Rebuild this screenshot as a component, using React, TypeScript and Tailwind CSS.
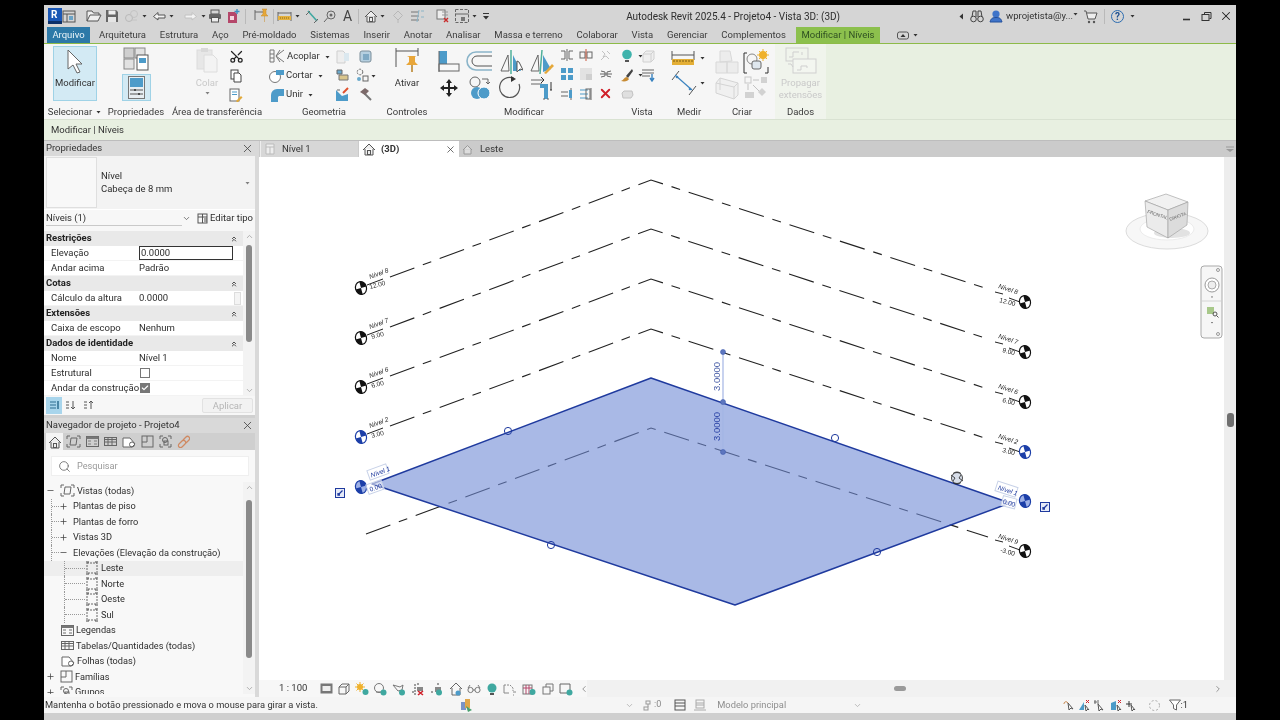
import type { ReactNode } from "react"
import { Scissors, Search, X, ChevronUp, ChevronDown, ChevronLeft, ChevronRight, Check, Minus, Plus, ChevronsUp } from "lucide-react"

function Ic({ w = 16, h, className, children }: { w?: number; h?: number; className?: string; children?: ReactNode }) {
  return (
    <svg width={w} height={h ?? w} viewBox={`0 0 ${w} ${h ?? w}`} fill="none" className={`shrink-0 ${className ?? ""}`}>
      {children}
    </svg>
  )
}

function Dot({ className }: { className?: string }) {
  return (
    <Ic w={5} h={4} className={className}>
      <path d="M0.5 1h4L2.5 3.5z" fill="#333" />
    </Ic>
  )
}

const Blue = "#4d9bc9"
const Teal = "#3fa8a0"

/* quick access */
const QPanel = () => (
  <Ic w={14}><rect x="1" y="2" width="12" height="11" stroke="#555" /><path d="M1 5h12M5 5v8" stroke="#555" /><rect x="7" y="7" width="4" height="4" fill="#6aa3c7" /></Ic>
)
const QOpen = () => (
  <Ic w={16}><path d="M1 13V3h5l1.5 2H13v2M1 13l3-6h11l-3 6z" stroke="#555" fill="#eee" /></Ic>
)
const QSave = () => (
  <Ic w={14}><path d="M1 1h10l2 2v10H1z" fill="#666" /><rect x="3.5" y="1.5" width="7" height="4" fill="#eee" /><rect x="3" y="8" width="8" height="5" fill="#e5e5e5" /></Ic>
)
const QSync = () => (
  <Ic w={14}><circle cx="5" cy="9" r="3.5" stroke="#b9b9b9" /><circle cx="10" cy="5" r="3.5" stroke="#c4c4c4" /><path d="M8 11h5" stroke="#c4c4c4" /></Ic>
)
const QUndo = ({ c = "#555" }: { c?: string }) => (
  <Ic w={14}><path d="M6 3.5L1.5 7.5 6 11V9h7V6H6z" stroke={c} fill="#f3f3f3" /></Ic>
)
const QRedo = () => (
  <Ic w={14}><path d="M8 3.5l4.5 4L8 11V9H1V6h7z" stroke="#c2c2c2" fill="#f3f3f3" /></Ic>
)
const QPrint = () => (
  <Ic w={14}><rect x="3" y="1" width="8" height="4" stroke="#555" /><rect x="1" y="5" width="12" height="5" rx="1" fill="#666" /><rect x="3.5" y="8.5" width="7" height="4.5" fill="#eee" stroke="#555" /></Ic>
)
const QDoc = () => (
  <Ic w={14}><path d="M2 3h7l2 2v9H2z" fill="#b5476a" /><rect x="4" y="7" width="4" height="4" fill="#f3d6df" /><path d="M11 0v5M8.5 2.5h5" stroke="#3d8fc0" strokeWidth="1.4" /></Ic>
)
const QPinDim = () => (
  <Ic w={16}>
    <path d="M1 2v10M1 4h9" stroke="#666" />
    <path d="M8 1h5l-1 1v4l2 2H7l2-2V2zM10.5 8v6" fill="#e5a83a" stroke="#c98a25" strokeWidth="0.5" />
  </Ic>
)
const QDim = () => (
  <Ic w={15}><path d="M1 3v9M14 3v9M1 4h13" stroke="#666" /><rect x="1" y="7" width="13" height="4" fill="#e5b13e" /><path d="M3 9h9" stroke="#8a6a16" strokeDasharray="1 1" /></Ic>
)
const QAlign = () => (
  <Ic w={14}><path d="M3 2l9 10" stroke={Teal} strokeWidth="1.6" /><path d="M1 6l4-4M9 14l4-4" stroke="#666" /></Ic>
)
const QTag = () => (
  <Ic w={14}><circle cx="8" cy="6" r="4" stroke="#666" /><circle cx="8" cy="6" r="1.5" fill="#666" /><path d="M4.5 9L1 13" stroke="#666" /></Ic>
)
const QHome = () => (
  <Ic w={14}><path d="M1 8l6-6 6 6M3 7v6h8V7" stroke="#555" fill="#eee" /><rect x="5.5" y="8.5" width="3" height="4" stroke="#555" /></Ic>
)
const QSection = () => (
  <Ic w={14}><path d="M7 2l4.5 4.5L7 11 2.5 6.5z" stroke="#b8b8b8" /><path d="M7 11v3" stroke="#b8b8b8" /></Ic>
)
const QLines = () => (
  <Ic w={14}><path d="M1 3h8M1 7h8M1 11h8" stroke="#777" /><path d="M9 1l-2 12M11 2h3M11 8h3" stroke="#8bb4c7" /></Ic>
)
const QCloseWin = () => (
  <Ic w={14}><rect x="1" y="1" width="8" height="9" stroke="#777" fill="#eee" /><path d="M6 3h6M6 6h6" stroke="#999" /><path d="M8 9l4 4M12 9l-4 4" stroke="#c92b2b" strokeWidth="1.4" /></Ic>
)
const QSwitch = () => (
  <Ic w={16}><rect x="1.5" y="1.5" width="13" height="13" stroke="#666" strokeDasharray="3 1.5" /><path d="M1.5 6h13" stroke="#666" /><rect x="7" y="9" width="4" height="4" fill="#777" /></Ic>
)
const QMore = () => (
  <Ic w={8} h={8}><path d="M1 1.5h6" stroke="#333" /><path d="M1 4h6L4 7.5z" fill="#333" /></Ic>
)
const VSep = ({ className }: { className?: string }) => <div className={`w-px h-[15px] bg-[#b9b9b9] ${className ?? ""}`} />

function TitleBar() {
  return (
    <div className="h-[22px] bg-[#d5d5d5] flex items-center text-[9.5px] text-[#2e2e2e] shrink-0">
      <div className="ml-[4px] w-[14px] h-[16px] bg-[#1a57b5] text-white text-[10px] font-bold leading-[13px] pl-[3px] border-b-[3px] border-[#0c3069]">R</div>
      <QPanel />
      <div className="flex items-center">
        <span className="ml-[10px]"><QOpen /></span>
        <span className="ml-[3px]"><QSave /></span>
        <span className="ml-[5px]"><QSync /></span>
        <Dot className="ml-[4px]" />
        <span className="ml-[5px]"><QUndo /></span>
        <Dot className="ml-[3px]" />
        <span className="ml-[10px]"><QRedo /></span>
        <Dot className="ml-[3px]" />
        <span className="ml-[2px]"><QPrint /></span>
        <span className="ml-[4px]"><QDoc /></span>
        <VSep className="ml-[5px]" />
        <span className="ml-[8px]"><QPinDim /></span>
        <VSep className="ml-[3px]" />
        <span className="ml-[3px]"><QDim /></span>
        <Dot className="ml-[3px]" />
        <span className="ml-[5px]"><QAlign /></span>
        <span className="ml-[4px]"><QTag /></span>
        <span className="ml-[6px] text-[14px] text-[#444] leading-none">A</span>
        <VSep className="ml-[6px]" />
        <span className="ml-[5px]"><QHome /></span>
        <Dot className="ml-[2px]" />
        <span className="ml-[6px]"><QSection /></span>
        <span className="ml-[5px]"><QLines /></span>
        <span className="ml-[12px]"><QCloseWin /></span>
        <span className="ml-[4px]"><QSwitch /></span>
        <Dot className="ml-[2px]" />
        <span className="ml-[5px]"><QMore /></span>
      </div>
      <div className="ml-[136px] w-[220px] text-[10px] whitespace-nowrap">Autodesk Revit 2025.4 - Projeto4 - Vista 3D: (3D)</div>
      <div className="ml-auto flex items-center pr-[3px]">
        <Ic w={5} h={7}><path d="M4 0.5v6L0.5 3.5z" fill="#333" /></Ic>
        <Ic w={14} className="ml-[6px]"><circle cx="3.5" cy="10" r="2.8" stroke="#444" /><circle cx="10.5" cy="10" r="2.8" stroke="#444" /><path d="M2 8l1-6h3v6M8 8V2h3l1 6" stroke="#444" /></Ic>
        <Ic w={14} className="ml-[5px]"><circle cx="7" cy="5" r="3.6" fill="#3f74c9" /><path d="M1 13c1-4 3-4.500 6-4.500S12 9 13 13z" fill="#3f74c9" stroke="#23509c" /></Ic>
        <span className="ml-[3px] text-[9.5px] text-[#333]">wprojetista@y...</span>
        <Dot className="-mt-[4px]" />
        <Ic w={15} className="ml-[5px]"><path d="M1 2h2l2 8h7l2-6H4" stroke="#555" fill="#eee" /><circle cx="6" cy="13" r="1.2" fill="#555" /><circle cx="11" cy="13" r="1.2" fill="#555" /></Ic>
        <VSep className="ml-[6px]" />
        <div className="ml-[6px] w-[13px] h-[13px] rounded-full border border-[#2c6cb0] text-[10px] leading-[11px] text-center font-bold text-[#1d4f8f]">?</div>
        <Dot className="ml-[6px]" />
        <Ic w={10} className="ml-[47px]"><path d="M1 8.500h7" stroke="#333" strokeWidth="1.6" /></Ic>
        <Ic w={11} className="ml-[9px]"><rect x="1" y="3.500" width="7" height="6" stroke="#333" /><path d="M3.500 3V1.500h6.500v6H8.500" stroke="#333" /></Ic>
        <X size={14} strokeWidth={1.8} className="ml-[7px] text-[#222]" />
      </div>
    </div>
  )
}

const tabs = ["Arquitetura", "Estrutura", "Aço", "Pré-moldado", "Sistemas", "Inserir", "Anotar", "Analisar", "Massa e terreno", "Colaborar", "Vista", "Gerenciar", "Complementos"]

function TabBar() {
  return (
    <div className="h-[17px] bg-[#d5d5d5] border-b border-[#8dbb48] flex items-stretch text-[9.5px] text-[#3c3c3c] shrink-0 pl-[3px]">
      <div className="w-[43px] bg-[#2d79a8] text-[#eaf4f9] flex items-center justify-center">Arquivo</div>
      <div className="flex items-center gap-[13.800px] ml-[9px]">
        {tabs.map(t => <span key={t} className="whitespace-nowrap">{t}</span>)}
      </div>
      <div className="ml-[10px] w-[84px] bg-[#8cc04d] text-[#2f4f22] flex items-center justify-center whitespace-nowrap">Modificar | Níveis</div>
      <Ic w={13} h={9} className="ml-[17px] self-center"><rect x="0.500" y="1" width="11" height="7" rx="2" stroke="#555" /><path d="M3.500 6l2.500-3 2.500 3z" fill="#333" /></Ic>
      <Dot className="ml-[3px] self-center" />
    </div>
  )
}

function Panel({ label, w, bg, children }: { label: ReactNode; w: string; bg?: string; children?: ReactNode }) {
  return (
    <div className={`${w} ${bg ?? ""} flex flex-col shrink-0`}>
      <div className="h-[60px] flex">{children}</div>
      <div className="h-[15px] pt-[1px] flex items-center justify-center text-[9.5px] text-[#3a3a3a] whitespace-nowrap">{label}</div>
    </div>
  )
}

/* ribbon icons */
const Paste = () => (
  <Ic w={22} h={26}><rect x="1" y="3" width="15" height="19" fill="#e7e7e7" stroke="#dcdcdc" /><rect x="5" y="1" width="7" height="4" fill="#d9d9d9" /><path d="M8 8h9l4 4v13H8z" fill="#f3f3f3" stroke="#dcdcdc" /></Ic>
)
const CopyI = () => (
  <Ic w={14}><rect x="2" y="1" width="7" height="9" stroke="#444" fill="#fff" /><path d="M5 4h5l2 2v7H5z" stroke="#444" fill="#fff" /></Ic>
)
const MatchI = () => (
  <Ic w={14}><rect x="1" y="1" width="9" height="12" stroke="#666" fill="#fff" /><path d="M3 4h5M3 6.500h5" stroke={Blue} /><path d="M7 13l5-5 1.500 1.500-5 5z" fill="#e2a93a" /></Ic>
)
const Acoplar = () => (
  <Ic w={18}><path d="M2 2h4v12H2zM2 6h4M2 10h4" stroke="#777" /><path d="M16 2L8 8l8 6M12 2l-4 6 4 6" stroke="#777" /></Ic>
)
const Cortar = () => (
  <Ic w={18}><circle cx="7" cy="10" r="5.500" stroke="#777" fill="#fff" /><path d="M8 3h8v5H8z" fill={Blue} /></Ic>
)
const Unir = () => (
  <Ic w={18}><path d="M3 16V9a6 6 0 016-6h7v7h-5l-1 1v5z" fill={Blue} /></Ic>
)
const Sm = ({ v }: { v: number }) => {
  if (v === 0) return <Ic w={15}><path d="M2 2h6l2 2v10H2z" stroke="#cfcfcf" fill="#eee" /><path d="M9 4h5v8H9z" fill="#dbe8ef" /></Ic>
  if (v === 1) return <Ic w={15}><rect x="2" y="2" width="11" height="11" rx="2" fill="#b5cfe0" stroke="#7d8f9b" /><rect x="5" y="5" width="6" height="6" fill="#7fa9c4" /></Ic>
  if (v === 2) return <Ic w={15}><path d="M2 2h5v4H2z" fill="#6aa9cc" stroke="#666" /><path d="M4 7h9v5H4z" fill="#d9c58c" stroke="#777" /></Ic>
  if (v === 3) return <Ic w={15}><circle cx="5" cy="4" r="2.800" stroke="#666" strokeDasharray="2 1" /><rect x="8" y="8" width="5" height="5" stroke="#666" /><circle cx="4" cy="11" r="2" fill="#6aa9cc" /></Ic>
  if (v === 4) return <Ic w={15}><path d="M1 14V3l6 6 6-2v7z" fill={Blue} /><path d="M8 6l5-5" stroke="#e0512d" strokeWidth="2" /><path d="M2 3h3" stroke="#666" /></Ic>
  return <Ic w={15}><path d="M5 5l8 8" stroke="#777" strokeWidth="2" /><path d="M2 5l5-4 4 3-4 4z" fill="#7c6a6a" /></Ic>
}
const Align = () => (
  <Ic w={22} h={24}><rect x="1" y="1" width="8" height="13" fill={Blue} /><rect x="1" y="14" width="20" height="7" stroke="#666" fill="#f8f8f8" /><path d="M1 1v21" stroke="#666" /></Ic>
)
const Offset = () => (
  <Ic w={27} h={24}><path d="M26 2H10a9 9 0 000 18h16" stroke="#8ab4c9" strokeWidth="1.600" /><path d="M26 6H11a5 5 0 000 10h15" stroke="#555" /></Ic>
)
const MirrorA = () => (
  <Ic w={24} h={26}><path d="M9 6L2 22h8z" stroke="#666" /><path d="M12 1v24" stroke="#4fb09a" strokeWidth="1.500" /><path d="M14 6l8 16h-8z" fill={Blue} /><path d="M18 12v11l3-3 3 1-4-8z" fill="#fff" stroke="#555" /></Ic>
)
const MirrorB = () => (
  <Ic w={26} h={26}><path d="M9 6L2 22h8z" stroke="#666" /><path d="M13 1l-2 24" stroke="#4fb09a" strokeWidth="1.500" /><path d="M14 6l8 14-8 3z" fill={Blue} /><path d="M15 24l8-9 2 2-8 8z" fill="#e5a83a" /></Ic>
)
const MoveI = () => (
  <Ic w={20}><path d="M10 1l3 4h-2v4h4V7l4 3-4 3v-2h-4v4h2l-3 4-3-4h2v-4H5v2l-4-3 4-3v2h4V5H7z" fill="#222" /></Ic>
)
const CopyBig = () => (
  <Ic w={24}><circle cx="7" cy="6" r="5" stroke="#666" /><path d="M14 3h6v5M20 8l-2-2M20 8l2-2" stroke="#666" /><circle cx="9" cy="17" r="6" fill={Blue} /><circle cx="16" cy="17" r="6" fill={Blue} stroke="#fff" /></Ic>
)
const RotateI = () => (
  <Ic w={24}><path d="M15 2.500A10 10 0 1020 8" stroke="#555" strokeWidth="1.200" /><path d="M12 0l5 3-5 3z" fill="#333" /></Ic>
)
const TrimI = () => (
  <Ic w={24}><path d="M1 4h13M1 8h11" stroke="#666" /><path d="M11 1l3 3-3 3" stroke="#333" /><path d="M10 8h8v15h-4V12h-4z" fill={Blue} /><path d="M21 6v8M20 14h2" stroke="#333" /><path d="M14 24v-2M18 24v-2" stroke="#666" /></Ic>
)
const Ms = ({ v }: { v: number }) => {
  const g = "#666"
  if (v === 0) return <Ic w={14}><path d="M1 3h4v8H1M13 3H9v8h4M7 1v12" stroke={g} /></Ic>
  if (v === 1) return <Ic w={14}><rect x="1" y="4" width="5" height="6" stroke={g} /><rect x="8" y="4" width="5" height="6" stroke={g} /><path d="M7 1v12" stroke="#c9563c" /></Ic>
  if (v === 2) return <Ic w={14}><path d="M3 3l3 3-2 3 3-1 3 3M8 3l3 3M2 12l3-3" stroke="#c2c2c2" /></Ic>
  if (v === 3) return <Ic w={14}><rect x="1" y="1" width="5" height="5" fill={Blue} /><rect x="8" y="1" width="5" height="5" fill={Blue} /><rect x="1" y="8" width="5" height="5" fill={Blue} /><rect x="8" y="8" width="5" height="5" fill={Blue} /></Ic>
  if (v === 4) return <Ic w={14}><rect x="1" y="1" width="12" height="12" fill="#e2e2e2" /><rect x="7" y="7" width="6" height="6" fill="#cfcfcf" /></Ic>
  if (v === 5) return <Ic w={14}><path d="M2 4l4 1v4l-4 1M12 4L8 5v4l4 1M1 7h12" stroke={g} /></Ic>
  if (v === 6) return <Ic w={14}><path d="M1 5h7M1 9h7" stroke={g} /><path d="M11 1v12" stroke={g} /><rect x="9" y="3" width="3" height="8" fill={Blue} /></Ic>
  if (v === 7) return <Ic w={14}><path d="M1 3h8M1 7h8M1 11h8" stroke={Blue} /><path d="M12 1v12" stroke={g} /><rect x="7" y="2" width="4" height="10" stroke={g} /></Ic>
  return <X size={15} strokeWidth={3} className="text-[#d0202a]" />
}
const Bulb = () => (
  <Ic w={14}><circle cx="7" cy="5.500" r="4.800" fill="#3fb3ac" /><path d="M5 11h4v2H5z" fill="#555" /></Ic>
)
const GrayCube = () => (
  <Ic w={14}><path d="M2 5l3-3h8v8l-3 3H2z" stroke="#d0d0d0" fill="#efefef" /><path d="M2 5h8v8M10 5l3-3" stroke="#d0d0d0" /></Ic>
)
const Brush = () => (
  <Ic w={14}><path d="M12 1L6 8l2 2 5-7z" fill="#444" /><path d="M7 9c-3 0-3 3-6 4 4 1 7 0 8-2z" fill="#c78b33" /></Ic>
)
const Overlay = () => (
  <Ic w={14}><path d="M1 2h12M1 5h12M1 8h8" stroke="#666" /><path d="M11 6v6M9 10l2 3 2-3" stroke="#3a83c0" strokeWidth="1.400" /></Ic>
)
const Pill = () => (
  <Ic w={14}><path d="M2 5l2-2h8l1 4-2 3H3z" fill="#dfdfdf" stroke="#c2c2c2" /></Ic>
)
const Ruler = () => (
  <Ic w={24} h={16}><path d="M1 1v9M23 1v9M1 5h22" stroke="#555" /><rect x="1" y="9" width="22" height="6" fill="#e4af36" /><path d="M3 10v2M6 10v2M9 10v2M12 10v2M15 10v2M18 10v2M21 10v2" stroke="#7d5d10" /></Ic>
)
const Diag = () => (
  <Ic w={26}><path d="M8 1L1 10M25 16l-7 9" stroke="#555" /><path d="M4 5l17 15" stroke="#3a83c0" strokeWidth="1.200" /><circle cx="6" cy="7" r="1.300" fill="#3a83c0" /><circle cx="19" cy="19" r="1.300" fill="#3a83c0" /></Ic>
)
const CubeL = () => (
  <Ic w={26}><path d="M5 2l10 0 2 10-12 1zM1 13h11v11H1zM12 13h11v11H12z" fill="#ececec" stroke="#d8d8d8" /></Ic>
)
const SunBr = () => (
  <Ic w={26}><path d="M4 4H1v20h3M22 24h3v-6" stroke="#333" /><circle cx="9" cy="10" r="5" stroke="#888" /><rect x="9" y="12" width="9" height="8" rx="2" fill="#dfe7ee" stroke="#666" /><circle cx="20" cy="6" r="4" fill="#efb12d" /><path d="M20 0v12M14 6h12M16 2l8 8M24 2l-8 8" stroke="#efb12d" /></Ic>
)
const Walls = () => (
  <Ic w={26}><path d="M1 8l4-5 18 5v12l-4 4L1 18z" fill="#f0f0f0" stroke="#d4d4d4" /><path d="M5 3v12M19 12v12M1 8l18 4 4-4" stroke="#d4d4d4" /></Ic>
)
const Flow = () => (
  <Ic w={24}><rect x="1" y="1" width="6" height="6" stroke="#c8c8c8" /><rect x="17" y="1" width="6" height="6" fill="#d2d2d2" /><path d="M9 4h6M4 8v6M9 9l6 6" stroke="#c2c2c2" /><rect x="1" y="16" width="9" height="6" fill="#d2d2d2" /><path d="M18 12l4 4-4 4-4-4z" fill="#d2d2d2" /></Ic>
)
const Prop = () => (
  <Ic w={32} h={27}><rect x="1" y="1" width="22" height="13" stroke="#cfcfcf" /><path d="M4 10h4v-5h6M17 5v3" stroke="#cfcfcf" /><rect x="8" y="12" width="23" height="14" stroke="#cfcfcf" fill="#f3f6f0" /><path d="M3 17h3l2 3M12 23h4v-4h6v2" stroke="#cfcfcf" /></Ic>
)

function Ribbon() {
  const R = "flex items-center h-[19px]"
  return (
    <div className="h-[76px] bg-[#e8f0e1] flex shrink-0 border-b border-[#d9e2d2]">
      <div className="flex bg-[#f6f6f6]">
        <Panel w="w-[61px]" label={<span className="flex items-center gap-[4px]">Selecionar <Dot /></span>}>
          <div className="ml-[9px] mt-[2px] w-[44px] h-[55px] bg-[#d3eaf4] border border-[#9fd2e6] flex flex-col items-center">
            <Ic w={20} h={26} className="mt-[2px]"><path d="M3 1v19l5-4 4 8 3-1-4-8h6z" stroke="#666" fill="#fff" /></Ic>
            <span className="text-[9.5px] text-[#333] mt-[1px]">Modificar</span>
          </div>
        </Panel>
        <Panel w="w-[62px]" label="Propriedades">
          <div className="w-full flex flex-col items-center mt-[2px]">
            <Ic w={26} h={26}>
              <rect x="1" y="2" width="10" height="10" fill="#cfcfcf" stroke="#888" /><rect x="12" y="2" width="10" height="10" fill="#e2e2e2" stroke="#888" />
              <rect x="1" y="13" width="10" height="10" fill="#e2e2e2" stroke="#888" /><rect x="14" y="9" width="11" height="15" fill="#fff" stroke="#555" /><rect x="16" y="12" width="7" height="5" fill="#4d9bc9" />
            </Ic>
            <div className="mt-[2px] w-[29px] h-[27px] bg-[#d3eaf4] border border-[#9fd2e6] flex items-center justify-center">
              <Ic w={17} h={23}><rect x="0.500" y="0.500" width="16" height="22" fill="#e8eef2" stroke="#777" /><rect x="2" y="2" width="13" height="9" fill="#4d9bc9" /><path d="M2 14h13M2 18h13" stroke="#555" /><path d="M7 13v2M11 17v2" stroke="#333" strokeWidth="1.500" /></Ic>
            </div>
          </div>
        </Panel>
        <Panel w="w-[100px]" label="Área de transferência">
          <div className="ml-[29px] w-[22px] mt-[3px] flex flex-col items-center">
            <Paste />
            <span className="text-[9.5px] text-[#c9c9c9] mt-[3px]">Colar</span>
            <Dot className="mt-[1px] opacity-60" />
          </div>
          <div className="ml-[10px] flex flex-col items-center w-[16px] mt-[3px]">
            <div className={R}><Scissors size={15} strokeWidth={2} className="text-[#222] -rotate-90" /></div>
            <div className={R}><CopyI /></div>
            <div className={R}><MatchI /></div>
          </div>
        </Panel>
        <Panel w="w-[114px]" label="Geometria">
          <div className="mt-[3px] pl-[1px] grid grid-cols-[63px_23px_23px] text-[9.5px] text-[#333]">
            <div className={R}><Acoplar /><span className="ml-[1px]">Acoplar</span><Dot className="ml-[5px]" /></div>
            <div className={`${R} justify-center`}><Sm v={0} /></div>
            <div className={`${R} justify-center`}><Sm v={1} /></div>
            <div className={R}><Cortar /><span>Cortar</span><Dot className="ml-[5px]" /></div>
            <div className={`${R} justify-center`}><Sm v={2} /></div>
            <div className={`${R} justify-center`}><Sm v={3} /><Dot className="ml-[1px]" /></div>
            <div className={R}><Unir /><span>Unir</span><Dot className="ml-[5px]" /></div>
            <div className={`${R} justify-center`}><Sm v={4} /></div>
            <div className={`${R} justify-center`}><Sm v={5} /></div>
          </div>
        </Panel>
        <Panel w="w-[52px]" label="Controles">
          <div className="w-full flex flex-col items-center mt-[3px]">
            <Ic w={24} h={26}><path d="M1 1v19M23 1v8M1 4h22" stroke="#555" /><path d="M12 9h9l-1 1v5l3 3H11l3-3v-5z" fill="#e8a63a" /><path d="M17 18v7" stroke="#b77f22" strokeWidth="1.500" /></Ic>
            <span className="text-[9.5px] text-[#333] mt-[3px]">Ativar</span>
          </div>
        </Panel>
        <Panel w="w-[182px]" label="Modificar">
          <div className="mt-[5px] grid grid-cols-[31px_31px_31px_31px] grid-rows-[26px_26px] place-items-center h-fit">
            <Align /><Offset /><MirrorA /><MirrorB />
            <MoveI /><CopyBig /><RotateI /><TrimI />
          </div>
          <div className="mt-[1px] grid grid-cols-[19.500px_19.500px_19.500px] auto-rows-[19.500px] place-items-center h-fit">
            {[0, 1, 2, 3, 4, 5, 6, 7, 8].map(v => <Ms key={v} v={v} />)}
          </div>
        </Panel>
        <Panel w="w-[54px]" label="Vista">
          <div className="mt-[2px] ml-[5px] grid grid-cols-[21px_17px] auto-rows-[19.500px] h-fit items-center text-center">
            <div className="flex items-center"><Bulb /><Dot className="ml-[4px]" /></div><GrayCube />
            <div className="flex items-center"><Brush /><Dot className="ml-[4px]" /></div><Overlay />
            <Pill />
          </div>
        </Panel>
        <Panel w="w-[40px]" label="Medir">
          <div className="flex flex-col mt-[6px] ml-[2px] gap-[4px]">
            <div className="flex items-center"><Ruler /><Dot className="ml-[5px]" /></div>
            <div className="flex items-center"><Diag /><Dot className="ml-[3px]" /></div>
          </div>
        </Panel>
        <Panel w="w-[66px]" label="Criar">
          <div className="ml-[5px] mt-[5px] grid grid-cols-[28px_28px] auto-rows-[26px] place-items-center h-fit">
            <CubeL /><SunBr /><Walls /><Flow />
          </div>
        </Panel>
      </div>
      <Panel w="w-[51px]" bg="bg-[#f0f4ec]" label="Dados">
        <div className="w-full flex flex-col items-center mt-[3px] text-[9.5px] text-[#c9c9c9] leading-[12px]">
          <Prop />
          <span className="mt-[3px]">Propagar</span>
          <span>extensões</span>
        </div>
      </Panel>
    </div>
  )
}

function OptionsBar() {
  return <div className="h-[21px] bg-[#e8f0e1] flex items-center pl-[7px] text-[9.5px] text-[#333] shrink-0 border-b border-[#bdbdbd]">Modificar | Níveis</div>
}

/* left side */
function Head({ title }: { title: string }) {
  return (
    <div className="h-[15px] bg-[#d9d9d9] flex items-center justify-between pl-[2px] pr-[1px] text-[9.5px] text-[#333] shrink-0">
      {title}
      <X size={13} strokeWidth={1.500} className="text-[#444]" />
    </div>
  )
}

const propRows = [
  { s: "Restrições" },
  { l: "Elevação", input: "0.0000" },
  { l: "Andar acima", v: "Padrão" },
  { s: "Cotas" },
  { l: "Cálculo da altura", v: "0.0000", extra: true },
  { s: "Extensões" },
  { l: "Caixa de escopo", v: "Nenhum" },
  { s: "Dados de identidade" },
  { l: "Nome", v: "Nível 1" },
  { l: "Estrutural", box: "off" },
  { l: "Andar da construção", box: "on" },
]

function Properties() {
  return (
    <div className="flex flex-col h-[274px] shrink-0 bg-[#f7f7f7] text-[9.5px] text-[#2d2d2d]">
      <Head title="Propriedades" />
      <div className="h-[53px] flex items-center bg-[#f3f3f3] shrink-0">
        <div className="ml-[2px] w-[51px] h-[51px] bg-[#f8f8f8] border border-[#dfdfdf]" />
        <div className="ml-[4px] leading-[12.500px] flex-1">Nível<br />Cabeça de 8 mm</div>
        <Dot className="mr-[5px] opacity-60" />
      </div>
      <div className="h-[17px] flex items-center px-[2px] shrink-0 border-t border-white">
        <span className="flex-1 border-b border-[#c9c9c9] leading-[15px]">Níveis (1)</span>
        <ChevronDown size={9} className="text-[#555] mr-[6px]" />
        <Ic w={11} h={11} className="mr-[2px]"><rect x="1" y="1" width="9" height="9" stroke="#555" /><path d="M1 4h9M5.500 1v9M7 6h3M7 8h3" stroke="#555" /></Ic>
        <span className="whitespace-nowrap">Editar tipo</span>
      </div>
      <div className="flex mt-[5px] h-[165px] shrink-0">
        <div className="w-[199px] flex flex-col">
          {propRows.map((r, i) =>
            r.s ? (
              <div key={i} className="h-[15px] bg-[#e9e9e9] flex items-center justify-between pl-[2px] pr-[5px] font-bold text-[#222]">
                {r.s}
                <ChevronsUp size={8} strokeWidth={2.500} className="text-[#333]" />
              </div>
            ) : (
              <div key={i} className="h-[15px] bg-white flex items-center border-b border-[#f3f3f3]">
                <span className="pl-[7px] w-[95px] whitespace-nowrap">{r.l}</span>
                {r.input && <div className="w-[94px] h-[14px] border border-[#333] leading-[12px] pl-[1px] bg-white">{r.input}</div>}
                {r.v && <span>{r.v}</span>}
                {r.extra && <span className="ml-auto mr-[2px] w-[7px] h-[13px] bg-[#f4f4f4] border border-[#ddd]" />}
                {r.box && (
                  <span className={`ml-[1px] w-[10px] h-[10px] border flex items-center justify-center ${r.box === "on" ? "bg-[#777] border-[#777]" : "bg-white border-[#777]"}`}>
                    {r.box === "on" && <Check size={8} strokeWidth={3.500} className="text-white" />}
                  </span>
                )}
              </div>
            ),
          )}
        </div>
        <Scroll thumbTop="mt-[4px]" thumbH="h-[97px]" />
      </div>
      <div className="h-[19px] flex items-center shrink-0 bg-[#f7f7f7]">
        <div className="ml-[2px] w-[16px] h-[17px] bg-[#a8d5ec] flex items-center justify-center">
          <Ic w={11}><path d="M1 2h6M1 5h6M1 8h6" stroke="#2d6d90" /><path d="M9 1v8" stroke="#2d6d90" strokeWidth="1.500" /></Ic>
        </div>
        <Ic w={11} className="ml-[3px]"><path d="M1 2h3M1 5h3M1 8h3M8 1v8M6 7l2 2 2-2" stroke="#555" /></Ic>
        <Ic w={11} className="ml-[7px]"><path d="M1 2h3M1 5h3M1 8h3M8 9V1M6 3l2-2 2 2" stroke="#555" /></Ic>
        <div className="ml-auto mr-[2px] w-[51px] h-[15px] border border-[#e2e2e2] rounded-[2px] bg-[#f2f2f2] text-[#b5b5b5] text-center leading-[13px]">Aplicar</div>
      </div>
    </div>
  )
}

function Scroll({ thumbTop, thumbH }: { thumbTop: string; thumbH: string }) {
  return (
    <div className="w-[12px] bg-[#f3f3f3] flex flex-col items-center">
      <ChevronUp size={9} strokeWidth={2} className="text-[#999] mt-[1px] shrink-0" />
      <div className={`w-[6px] rounded-[3px] bg-[#8a8a8a] ${thumbTop} ${thumbH} shrink-0`} />
      <ChevronDown size={9} strokeWidth={2} className="text-[#999] mt-auto mb-[1px] shrink-0" />
    </div>
  )
}

const ElevI = () => (
  <Ic w={14}><rect x="2" y="2" width="10" height="10" stroke="#666" strokeDasharray="2 1" /><path d="M1 1h3M10 1h3M1 13h3M10 13h3" stroke="#444" /></Ic>
)
const ViewsI = () => (
  <Ic w={15}><path d="M1 5V2h3M11 2h3v3M1 10v3h3M11 13h3v-3" stroke="#666" /><path d="M5 4h6l-1 7H4z" stroke="#666" /></Ic>
)
const LegI = () => (
  <Ic w={13}><rect x="0.500" y="1.500" width="12" height="10" stroke="#666" /><rect x="0.500" y="1.500" width="12" height="2.500" fill="#777" /><path d="M2 6h3M8 6h3M2 9h3M8 9h3" stroke="#999" strokeWidth="1.500" /></Ic>
)
const TabI = () => (
  <Ic w={13}><rect x="0.500" y="2.500" width="12" height="8" stroke="#666" /><path d="M0 4.500h13M0 7h13M4 2.500v8M8 2.500v8" stroke="#666" /></Ic>
)
const SheetI = () => (
  <Ic w={14}><path d="M1 3h7l5 6-3 3H1z" stroke="#666" fill="#fff" /><circle cx="10" cy="9.500" r="2.500" stroke="#666" /></Ic>
)
const FamI = () => (
  <Ic w={13}><rect x="1" y="1" width="11" height="11" stroke="#666" /><path d="M6 1v6H1" stroke="#666" /></Ic>
)
const GrpI = () => (
  <Ic w={13}><path d="M1 4V1h3M9 1h3v3M1 9v3h3M9 12h3V9" stroke="#666" /><circle cx="6" cy="5" r="2.500" stroke="#666" /><rect x="5" y="6" width="4" height="4" stroke="#666" /></Ic>
)

function TreeRow({ ml, sign, icon, label, sel, line }: { ml: string; sign?: "+" | "-"; icon?: ReactNode; label: string; sel?: boolean; line?: string }) {
  return (
    <div className={`h-[15.500px] flex items-center whitespace-nowrap ${sel ? "bg-[#eeeeee]" : ""}`}>
      <span className={`${ml} flex items-center`}>
        {line && (
          <span className={`${line} h-[15.500px] border-l border-dotted border-[#999] shrink-0 flex items-center`}>
            <span className="w-full border-t border-dotted border-[#999]" />
          </span>
        )}
        {sign === "+" && <Plus size={9} strokeWidth={2} className="text-[#444] mr-[5px] shrink-0" />}
        {sign === "-" && <Minus size={9} strokeWidth={2} className="text-[#444] mr-[5px] shrink-0" />}
        {icon && <span className="mr-[2px] flex">{icon}</span>}
        {label}
      </span>
    </div>
  )
}

function Browser() {
  return (
    <div className="flex flex-col flex-1 min-h-0 bg-[#f8f8f8] text-[9.2px] text-[#2d2d2d]">
      <Head title="Navegador de projeto - Projeto4" />
      <div className="h-[17px] bg-[#cfcfcf] flex items-center shrink-0">
        <div className="w-[17px] h-full bg-[#f4f4f4] flex items-center justify-center ml-[2px]"><QHome /></div>
        <div className="flex items-center gap-[5px] ml-[3px]">
          <ViewsI /><LegI /><TabI /><SheetI /><FamI /><GrpI />
          <Ic w={13}><path d="M2 9l3-3a2 2 0 013 3L5 12a2 2 0 01-3-3zM6 5l3-3a2 2 0 013 3L9 8" stroke="#cf8a63" strokeWidth="1.200" /></Ic>
        </div>
      </div>
      <div className="mt-[6px] ml-[7px] h-[20px] w-[198px] bg-white border border-[#efefef] flex items-center shrink-0">
        <Search size={13} strokeWidth={1.500} className="ml-[6px] text-[#666]" />
        <span className="ml-[6px] text-[#999]">Pesquisar</span>
      </div>
      <div className="flex flex-1 mt-[6px] mb-[3px] min-h-0 overflow-hidden">
        <div className="w-[199px] overflow-hidden pt-[1px]">
          <TreeRow ml="ml-[2px]" sign="-" icon={<ViewsI />} label="Vistas (todas)" />
          <TreeRow ml="ml-[7px]" line="w-[8px]" sign="+" label="Plantas de piso" />
          <TreeRow ml="ml-[7px]" line="w-[8px]" sign="+" label="Plantas de forro" />
          <TreeRow ml="ml-[7px]" line="w-[8px]" sign="+" label="Vistas 3D" />
          <TreeRow ml="ml-[7px]" line="w-[8px]" sign="-" label="Elevações (Elevação da construção)" />
          <TreeRow ml="ml-[20px]" line="w-[21px]" icon={<ElevI />} label="Leste" sel />
          <TreeRow ml="ml-[20px]" line="w-[21px]" icon={<ElevI />} label="Norte" />
          <TreeRow ml="ml-[20px]" line="w-[21px]" icon={<ElevI />} label="Oeste" />
          <TreeRow ml="ml-[20px]" line="w-[21px]" icon={<ElevI />} label="Sul" />
          <TreeRow ml="ml-[17px]" icon={<LegI />} label="Legendas" />
          <TreeRow ml="ml-[17px]" icon={<TabI />} label="Tabelas/Quantidades (todas)" />
          <TreeRow ml="ml-[17px]" icon={<SheetI />} label="Folhas (todas)" />
          <TreeRow ml="ml-[2px]" sign="+" icon={<FamI />} label="Famílias" />
          <TreeRow ml="ml-[2px]" sign="+" icon={<GrpI />} label="Grupos" />
        </div>
        <Scroll thumbTop="mt-[8px]" thumbH="h-[158px]" />
      </div>
    </div>
  )
}

/* canvas */
const levels = [
  { n: "Nível 8", e: "12.00", ly: 288, ay: 180, ry: 301 },
  { n: "Nível 7", e: "9.00", ly: 338, ay: 229, ry: 351 },
  { n: "Nível 6", e: "6.00", ly: 387, ay: 279, ry: 401 },
  { n: "Nível 2", e: "3.00", ly: 437, ay: 329, ry: 451, blue: true },
]

function LevelHead({ x, y, c, fill }: { x: number; y: number; c: string; fill?: string }) {
  return (
    <g transform={`rotate(-15 ${x} ${y})`}>
      <ellipse cx={x} cy={y} rx="5.500" ry="6.500" fill={fill ?? "#fff"} stroke={c} strokeWidth="1.200" />
      <path d={`M${x} ${y}V${y - 6.5}A5.500 6.500 0 01${x + 5.5} ${y}zM${x} ${y}V${y + 6.5}A5.500 6.500 0 01${x - 5.5} ${y}z`} fill={c} />
    </g>
  )
}

function Canvas() {
  const txt = "'Liberation Sans',sans-serif"
  return (
    <svg width={965} height={523} viewBox="259 157 965 523" fill="none" className="block bg-white" fontFamily={txt}>
      {levels.map(l => (
        <g key={l.n}>
          <path d={`M390 ${l.ly - 11}L651 ${l.ay}L988 ${l.ry - 12}`} stroke="#222" strokeWidth="1.100" strokeDasharray="26 9 9 9" />
          <path d={`M367 ${l.ly - 3}L383 ${l.ly - 9}M995 ${l.ry - 9}L1003 ${l.ry - 7}M1009 ${l.ry - 3}L1020 ${l.ry + 1}`} stroke="#222" />
          <LevelHead x={361} y={l.ly} c={l.blue ? "#1c3fa8" : "#111"} />
          <LevelHead x={1025} y={l.ry + 1} c={l.blue ? "#1c3fa8" : "#111"} />
          <text transform={`translate(370 ${l.ly - 9}) rotate(-20)`} fontSize="6.500" fontStyle="italic" fill="#222">{l.n}</text>
          <text transform={`translate(${l.e.length > 4 ? 370 : 372} ${l.ly + 1}) rotate(-15)`} fontSize="6.500" fill="#222">{l.e}</text>
          <text transform={`translate(998 ${l.ry - 13}) rotate(18)`} fontSize="6.500" fontStyle="italic" fill="#222">{l.n}</text>
          <text transform={`translate(${l.e.length > 4 ? 999 : 1002} ${l.ry + 1}) rotate(15)`} fontSize="6.500" fill="#222">{l.e}</text>
        </g>
      ))}

      {/* Nivel 9 under the plane */}
      <path d="M366 534L651 428L988 537" stroke="#222" strokeWidth="1.100" strokeDasharray="26 9 9 9" />
      <path d="M995 540L1003 542M1009 546L1020 550" stroke="#222" />
      <LevelHead x={1025} y={551} c="#111" />
      <text transform="translate(998 538) rotate(18)" fontSize="6.500" fontStyle="italic" fill="#222">Nível 9</text>
      <text transform="translate(1000 552) rotate(15)" fontSize="6.500" fill="#222">-3.00</text>

      {/* plane */}
      <polygon points="372,484 651,378 1010,503 735,605" fill="#6f8ad6" fillOpacity="0.6" stroke="#1f3a9e" strokeWidth="1.500" strokeLinejoin="round" />
      {[[508, 431], [835, 438], [551, 545], [877, 552]].map(([x, y]) => (
        <circle key={x} cx={x} cy={y} r="3.600" stroke="#1f3a9e" />
      ))}

      {/* Nivel 1 heads */}
      <LevelHead x={361} y={487} c="#1c3fa8" fill="#9db0e6" />
      <LevelHead x={1025} y={501} c="#1c3fa8" fill="#9db0e6" />
      <g transform="rotate(-20 378 472)">
        <rect x="368" y="467" width="20" height="10" fill="#fff" fillOpacity="0.9" stroke="#c8d2e8" />
        <text x="370" y="475" fontSize="6.500" fontStyle="italic" fill="#1f3a9e">Nível 1</text>
      </g>
      <g transform="rotate(-20 375 487)">
        <rect x="367" y="482" width="16" height="10" fill="#fff" fillOpacity="0.55" stroke="#c8d2e8" />
        <text x="369" y="490" fontSize="6.500" fill="#1f3a9e">0.00</text>
      </g>
      <g transform="rotate(18 1006 489)">
        <rect x="996" y="484" width="21" height="10" fill="#fff" stroke="#c8d2e8" />
        <text x="998" y="492" fontSize="6.500" fontStyle="italic" fill="#1f3a9e">Nível 1</text>
      </g>
      <g transform="rotate(15 1008 502)">
        <rect x="1002" y="497" width="14" height="10" fill="#fff" fillOpacity="0.8" stroke="#c8d2e8" />
        <text x="1003" y="505" fontSize="6.500" fill="#1f3a9e">0.00</text>
      </g>
      {[[340, 493], [1045, 507]].map(([x, y]) => (
        <g key={x}>
          <rect x={x - 4.5} y={y - 4.5} width="9" height="9" fill="#e6ebf8" stroke="#1f3a9e" />
          <path d={`M${x + 2.5} ${y - 2.5}L${x - 2} ${y + 2}M${x - 2} ${y}V${y + 2}H${x}`} stroke="#1f3a9e" strokeWidth="1.300" />
        </g>
      ))}

      {/* temporary dimension */}
      <path d="M723 352V452" stroke="#a3b5e4" strokeWidth="1.200" />
      {[352, 402, 452].map(y => <circle key={y} cx="723" cy={y} r="2.500" fill="#5d76bf" stroke="#3f5cad" strokeWidth="0.600" />)}
      <text transform="translate(720 391) rotate(-90)" fontSize="9.500" fill="#4a5fa8">3.0000</text>
      <text transform="translate(720 441) rotate(-90)" fontSize="9.500" fill="#2f47a8">3.0000</text>

      {/* orbit cursor */}
      <g stroke="#222" strokeWidth="0.800">
        <circle cx="957" cy="478" r="5.500" fill="#d8dee9" />
        <path d="M951 475l4 3-2 3M963 481l-4-3 2-3" />
        <path d="M953 473.500a6 6 0 018 0M961 482.500a6 6 0 01-8 0" />
      </g>

      {/* view cube */}
      <ellipse cx="1167" cy="231" rx="41" ry="18" fill="#f7f7f7" stroke="#dcdcdc" />
      <ellipse cx="1167" cy="229" rx="27" ry="11" fill="#fff" stroke="#ececec" />
      <ellipse cx="1172" cy="233" rx="18" ry="5" fill="#e2e2e2" />
      <polygon points="1145,201 1166,194 1188,202 1168,210" fill="#f1f1f1" stroke="#9a9a9a" strokeWidth="0.600" />
      <polygon points="1145,201 1168,210 1168,238 1147,227" fill="#ebebeb" stroke="#9a9a9a" strokeWidth="0.600" />
      <polygon points="1168,210 1188,202 1187,225 1168,238" fill="#dcdcdc" stroke="#9a9a9a" strokeWidth="0.600" />
      <text transform="translate(1147 213) rotate(18)" fontSize="4.600" fill="#666">FRONTAL</text>
      <text transform="translate(1170 221) rotate(-20)" fontSize="4.600" fill="#666">DIREITA</text>

      {/* nav bar */}
      <rect x="1201" y="266" width="21" height="72" rx="3" fill="#f6f6f6" stroke="#a9a9a9" />
      <circle cx="1218" cy="270" r="1.500" stroke="#999" />
      <circle cx="1218" cy="334" r="1.500" stroke="#999" />
      <circle cx="1212" cy="285" r="7" stroke="#999" fill="#fff" />
      <circle cx="1212" cy="285" r="4" stroke="#aaa" fill="#eee" />
      <path d="M1211 296.500h2l-1 1.500zM1211 322h2l-1 1.500z" fill="#555" />
      <path d="M1202 301h19" stroke="#d4d4d4" />
      <rect x="1207" y="307" width="7" height="7" fill="#a8c88a" />
      <circle cx="1215" cy="314" r="2" stroke="#555" />
      <path d="M1216.500 315.500l2 2" stroke="#555" />
    </svg>
  )
}

function RightScroll() {
  return (
    <div className="w-[12px] bg-[#ededed] flex flex-col items-center shrink-0">
      <div className="mt-[256px] w-[7px] h-[14px] rounded-[3px] bg-[#6f6f6f]" />
    </div>
  )
}

/* view control bar icons */
const vb = [
  <Ic w={13} key="0" h={11}><rect x="0.500" y="0.500" width="12" height="10" fill="#777" /><rect x="2.500" y="3" width="8" height="5" fill="#eee" /></Ic>,
  <Ic w={12} key="1"><path d="M1 4l3-3h7v7l-3 3H1zM1 4h7v7M8 4l3-3" stroke="#666" /></Ic>,
  <Ic w={14} key="2"><circle cx="5" cy="5" r="3" fill="#efb12d" /><path d="M5 0v10M0 5h10M1.500 1.500l7 7M8.500 1.500l-7 7" stroke="#efb12d" /><circle cx="10.500" cy="10" r="3" fill={Teal} /></Ic>,
  <Ic w={14} key="3"><circle cx="6" cy="6" r="4.500" stroke="#777" /><path d="M3 10h8" stroke="#777" /><circle cx="10.500" cy="10.500" r="3" fill={Teal} /></Ic>,
  <Ic w={14} key="4"><path d="M1 3l7 2 3-2-1 5-4 1z" stroke="#777" /><circle cx="10" cy="10.500" r="3" fill={Teal} /></Ic>,
  <Ic w={14} key="5"><path d="M1 10h3M4 2v11M7 1v3" stroke="#444" strokeDasharray="2 1" /><rect x="6" y="5" width="6" height="4" fill="#888" /><path d="M7 9l5 4M12 9l-5 4" stroke="#d0202a" strokeWidth="1.600" /></Ic>,
  <Ic w={14} key="6"><path d="M1 10h3M8 1v3" stroke="#444" strokeDasharray="2 1" /><rect x="5" y="5" width="6" height="5" fill="#888" /><circle cx="9" cy="10.500" r="3" fill={Teal} /></Ic>,
  <Ic w={14} key="7"><path d="M1 7l6-6 6 6M3 6v7h8V6" stroke="#666" /><circle cx="9" cy="11" r="2.500" fill={Blue} /></Ic>,
  <Ic w={14} key="8"><circle cx="3.500" cy="8" r="2.600" stroke="#777" /><circle cx="10.500" cy="8" r="2.600" stroke="#777" /><path d="M3 3l-2 3M11 3l2 3M6 8h2" stroke="#777" /></Ic>,
  <Ic w={12} key="9"><circle cx="6" cy="5" r="4.500" fill={Teal} /><path d="M4 10h4v2H4z" fill="#555" /></Ic>,
  <Ic w={14} key="10"><path d="M1 3h6l3 3v3" stroke="#888" strokeDasharray="2 1" /><path d="M1 3v8h5" stroke="#888" /><path d="M10 10h3M10 13h1" stroke="#888" /></Ic>,
  <Ic w={14} key="11"><rect x="1" y="3" width="9" height="9" stroke="#777" /><path d="M1 6h9M4 3v9M7 3v9" stroke="#b5476a" /><circle cx="10.500" cy="10" r="3" fill={Teal} /></Ic>,
  <Ic w={14} key="12"><rect x="2" y="5" width="7" height="7" stroke="#777" /><path d="M5 5V2h7v7H9" stroke="#777" /></Ic>,
  <Ic w={14} key="13"><path d="M1 2h10v6" stroke="#666" /><path d="M1 2v9h7" stroke="#666" /><circle cx="10.500" cy="10.500" r="3" fill={Teal} /></Ic>,
]

function ViewBar() {
  return (
    <div className="h-[17px] flex items-center bg-[#f1f1f1] shrink-0 text-[9.5px] text-[#333]">
      <div className="w-[328px] h-full bg-[#f7f7f7] flex items-center">
        <span className="ml-[20px] w-[41px]">1 : 100</span>
        <div className="flex items-center gap-[4.800px]">{vb}</div>
      </div>
      <ChevronLeft size={10} strokeWidth={1.800} className="ml-[-8px] text-[#777]" />
      <div className="ml-auto mr-[307px] w-[12px] h-[5px] rounded-[3px] bg-[#9a9a9a]" />
      <ChevronRight size={10} strokeWidth={1.800} className="mr-[13px] text-[#777]" />
    </div>
  )
}

function StatusBar() {
  return (
    <div className="h-[16px] bg-[#f5f5f5] flex items-center text-[9.3px] text-[#333] shrink-0">
      <span className="ml-[1px] w-[400px] whitespace-nowrap">Mantenha o botão pressionado e mova o mouse para girar a vista.</span>
      <Ic w={14} className="ml-[15px]"><rect x="1" y="4" width="5" height="8" fill="#7a93c7" /><rect x="5" y="1" width="5" height="9" fill="#e0a64a" /><path d="M6 8l6 4-4 2z" fill="#49a06e" /></Ic>
      <ChevronDown size={9} className="ml-[151px] text-[#aaa]" />
      <Ic w={11} className="ml-[9px]"><rect x="3" y="1" width="4" height="3" stroke="#999" /><rect x="1" y="7" width="4" height="3" stroke="#999" /><path d="M5 4v3" stroke="#999" /></Ic>
      <span className="text-[#888] text-[9px]">:0</span>
      <Ic w={12} className="ml-[13px]"><rect x="1" y="1" width="10" height="10" stroke="#555" /><path d="M1 4h10M1 7h10" stroke="#555" /></Ic>
      <Ic w={12} className="ml-[8px]"><rect x="2" y="1" width="8" height="8" stroke="#aaa" /><path d="M0 11h12M2 4h8M2 6h8" stroke="#aaa" /></Ic>
      <span className="ml-[11px] text-[#8e8e8e]">Modelo principal</span>
      <ChevronDown size={9} className="ml-[67px] text-[#aaa]" />
      <div className="ml-auto flex items-center gap-[3px] pr-[48px]">
        <Ic w={12}><path d="M1 5a2 2 0 013-2l1 1" stroke="#c78b56" /><path d="M5 4l1 7 2-2 2 1z" stroke="#555" fill="#fff" /></Ic>
        <Ic w={12}><path d="M1 11l5-8v8z" fill={Blue} /><path d="M8 1l3 3M11 1L8 4" stroke="#d0202a" /><path d="M7 6l1 6 2-2 1 1z" stroke="#555" fill="#fff" /></Ic>
        <Ic w={12}><path d="M2 1v4M1 3h3M5 1v4" stroke="#666" /><path d="M5 5l1 7 2-2 2 1z" stroke="#555" fill="#fff" /></Ic>
        <Ic w={12} className="ml-[2px]"><path d="M1 11V4l5-2v9z" fill={Blue} /><path d="M8 1l3 3M11 1L8 4" stroke="#d0202a" /><path d="M7 6l1 6 2-2 1 1z" stroke="#555" fill="#fff" /></Ic>
        <Ic w={12}><path d="M1 5h6M4 2v6" stroke="#333" /><path d="M6 6l1 6 2-2 1 1z" stroke="#555" fill="#fff" /></Ic>
        <Ic w={13} className="ml-[8px]"><circle cx="6.500" cy="6.500" r="5" stroke="#aaa" strokeDasharray="2 2" /></Ic>
        <span className="flex items-center ml-[5px] text-[#333]">
          <Ic w={12}><path d="M0.500 1h11L7.500 6v5l-3-1.500V6z" stroke="#666" fill="#fff" /></Ic>:1
        </span>
      </div>
    </div>
  )
}

function DocTabs() {
  return (
    <div className="h-[16px] bg-[#cbcbcb] flex items-stretch text-[9.5px] text-[#333] shrink-0 pl-[1px]">
      <div className="w-[98px] bg-[#d7d7d7] flex items-center pl-[4px] border-l border-[#eee]">
        <Ic w={10} h={12}><path d="M1 1h8v10H1zM1 4h8M5 4v7" stroke="#bbb" fill="#eee" /></Ic>
        <span className="ml-[7px]">Nível 1</span>
      </div>
      <div className="w-[100px] ml-[1px] bg-white flex items-center pl-[3px]">
        <QHome />
        <span className="ml-[5px] font-bold">(3D)</span>
        <X size={11} strokeWidth={1.500} className="ml-auto mr-[3px] text-[#333]" />
      </div>
      <div className="w-[92px] bg-[#cbcbcb] flex items-center pl-[3px]">
        <Ic w={11}><path d="M1 6l4.500-4.500L10 6M2 5.500V10h7V5.500" stroke="#999" fill="#ddd" /></Ic>
        <span className="ml-[7px]">Leste</span>
      </div>
      <Ic w={8} h={7} className="ml-auto mr-[2px] self-center"><path d="M0 1h8" stroke="#999" /><path d="M0 3h8L4 6z" fill="#999" /></Ic>
    </div>
  )
}

export default function App() {
  return (
    <div className="w-[1280px] h-[720px] bg-black overflow-hidden pl-[44px] pr-[44px] pt-[5px] font-['Roboto',sans-serif]">
      <div className="h-[715px] bg-[#d0d0d0] flex flex-col blur-[0.3px]">
        <TitleBar />
        <TabBar />
        <Ribbon />
        <OptionsBar />
        <div className="flex h-[556px] shrink-0">
          <div className="w-[211px] flex flex-col shrink-0 h-full overflow-hidden bg-[#f8f8f8]">
            <Properties />
            <div className="h-[3px] bg-[#d0d0d0] shrink-0" />
            <Browser />
          </div>
          <div className="w-[4px] bg-[#d9d9d9] shrink-0" />
          <div className="flex-1 min-w-0 flex flex-col">
            <DocTabs />
            <div className="flex">
              <Canvas />
              <RightScroll />
            </div>
            <ViewBar />
          </div>
        </div>
        <StatusBar />
        <div className="h-[7px] bg-[#cfcfcf] shrink-0" />
      </div>
    </div>
  )
}
